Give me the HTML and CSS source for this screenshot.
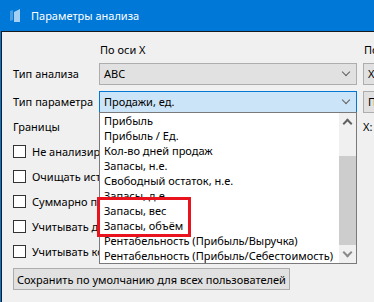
FILE: index.html
```html
<!DOCTYPE html>
<html lang="ru">
<head>
<meta charset="utf-8">
<title>Параметры анализа</title>
<link rel="stylesheet" href="styles.css">
</head>
<body>
<div class="window">
  <div class="titlebar">
    <svg class="app-icon" width="14" height="14" viewBox="0 0 14 14">
      <polygon points="1,2 4,1 4,11 1,12" fill="#4c9ee0"/>
      <polygon points="5,3 11,0 11,13 5,13" fill="#a5d0f3"/>
    </svg>
    <span class="title">Параметры анализа</span>
  </div>
  <div class="client">
    <div class="grid">
      <div></div>
      <div class="colhead">По оси X</div>
      <div class="colhead">По оси Y</div>

      <div class="label">Тип анализа</div>
      <div class="combo"><span class="combo-text">ABC</span><span class="chev"></span></div>
      <div class="combo"><span class="combo-text">XYZ</span><span class="chev"></span></div>

      <div class="label">Тип параметра</div>
      <div class="combo-wrap">
        <div class="combo focused"><span class="combo-text">Продажи, ед.</span><span class="chev"></span></div>
        <div class="dropdown">
          <ul class="items">
            <li>Прибыль</li>
            <li>Прибыль / Ед.</li>
            <li>Кол-во дней продаж</li>
            <li>Запасы, н.е.</li>
            <li>Свободный остаток, н.е.</li>
            <li>Запасы, д.е.</li>
            <li>Запасы, вес</li>
            <li>Запасы, объём</li>
            <li>Рентабельность (Прибыль/Выручка)</li>
            <li>Рентабельность (Прибыль/Себестоимость)</li>
          </ul>
          <div class="scrollbar">
            <div class="sb-btn"><span class="sb-up"></span></div>
            <div class="sb-track"><div class="sb-thumb"></div></div>
            <div class="sb-btn"><span class="sb-down"></span></div>
          </div>
        </div>
      </div>
      <div class="combo"><span class="combo-text">Продажи, ед.</span><span class="chev"></span></div>

      <div class="label">Границы</div>
      <div class="label"></div>
      <div class="label">X: 80</div>
    </div>

    <div class="checks">
      <label class="check"><span class="box"></span>Не анализировать товары</label>
      <label class="check"><span class="box"></span>Очищать историю</label>
      <label class="check"><span class="box"></span>Суммарно по складам</label>
      <label class="check"><span class="box"></span>Учитывать дефицит</label>
      <label class="check"><span class="box"></span>Учитывать комплекты</label>
    </div>

    <button class="btn">Сохранить по умолчанию для всех пользователей</button>
  </div>
</div>
<div class="highlight"></div>
</body>
</html>
```
FILE: styles.css
```css
html, body {
  margin: 0;
  padding: 0;
}
body {
  width: 374px;
  height: 302px;
  overflow: hidden;
  background: #0078d7;
  font-family: "Noto Sans", "Open Sans", sans-serif;
  font-size: 11px;
  color: #000;
  position: relative;
}
.window {
  width: 600px;
}
.titlebar {
  height: 31px;
  display: flex;
  align-items: center;
  color: #fff;
}
.app-icon {
  margin-left: 9px;
  margin-right: 8px;
  margin-top: 1px;
}
.title {
  font-size: 11px;
  line-height: 16px;
}
.client {
  margin-left: 1px;
  border-left: 1px solid #1a1a1a;
  border-top: 1px solid #1a1a1a;
  background: #f0f0f0;
  height: 280px;
  padding-left: 11px;
}
.grid {
  display: grid;
  grid-template-columns: 80px 258px 258px;
  grid-template-rows: 15px 22px 22px 16px;
  column-gap: 6px;
  row-gap: 6px;
  padding-top: 10px;
  align-items: center;
}
.colhead {
  line-height: 15px;
  padding-left: 1px;
}
.label {
  line-height: 16px;
  white-space: nowrap;
}
.combo {
  box-sizing: border-box;
  height: 22px;
  border: 1px solid #adadad;
  background: #e1e1e1;
  display: flex;
  align-items: center;
  justify-content: space-between;
  padding: 0 7px 0 4px;
  position: relative;
}
.combo.focused {
  border-color: #0078d7;
  background: #cce4f7;
}
.combo-text {
  line-height: 16px;
  white-space: nowrap;
}
.chev {
  width: 5px;
  height: 5px;
  border-right: 1px solid #606060;
  border-bottom: 1px solid #606060;
  transform: rotate(45deg);
  margin-top: -4px;
}
.combo-wrap {
  position: relative;
  height: 22px;
}
.dropdown {
  position: absolute;
  z-index: 5;
  left: 0;
  top: 21px;
  width: 258px;
  height: 152px;
  box-sizing: border-box;
  border: 1px solid #7a7a7a;
  background: #fff;
  display: flex;
}
.items {
  list-style: none;
  margin: 0;
  padding: 0;
  flex: 1;
  overflow: hidden;
}
.items li {
  height: 15px;
  line-height: 15px;
  padding-left: 4px;
  white-space: nowrap;
}
.scrollbar {
  width: 17px;
  background: #f0f0f0;
  display: flex;
  flex-direction: column;
}
.sb-btn {
  height: 17px;
  display: flex;
  align-items: center;
  justify-content: center;
}
.sb-up, .sb-down {
  width: 5px;
  height: 5px;
  border-left: 2px solid #606060;
  border-top: 2px solid #606060;
}
.sb-up {
  transform: rotate(45deg);
  margin-top: 4px;
}
.sb-down {
  transform: rotate(225deg);
  margin-top: -4px;
  border-color: #8a8a8a;
}
.sb-track {
  flex: 1;
  padding-top: 26px;
  padding-bottom: 1px;
  display: flex;
  flex-direction: column;
}
.sb-thumb {
  flex: 1;
  background: #cdcdcd;
}
.checks {
  display: flex;
  flex-direction: column;
  margin-top: 4px;
}
.check {
  height: 25px;
  display: flex;
  align-items: center;
  white-space: nowrap;
}
.box {
  box-sizing: border-box;
  width: 13px;
  height: 13px;
  border: 1px solid #333;
  background: #fff;
  margin-right: 6px;
}
.btn {
  margin-top: 4px;
  box-sizing: border-box;
  height: 22px;
  width: 277px;
  border: 1px solid #adadad;
  background: #e1e1e1;
  font-family: inherit;
  font-size: 11px;
  color: #000;
  padding: 0 0 0 3px;
  text-align: left;
  white-space: nowrap;
}
.highlight {
  position: absolute;
  z-index: 10;
  left: 97px;
  top: 197px;
  width: 94px;
  height: 40px;
  box-sizing: border-box;
  border: 3px solid #e8131d;
}
```
